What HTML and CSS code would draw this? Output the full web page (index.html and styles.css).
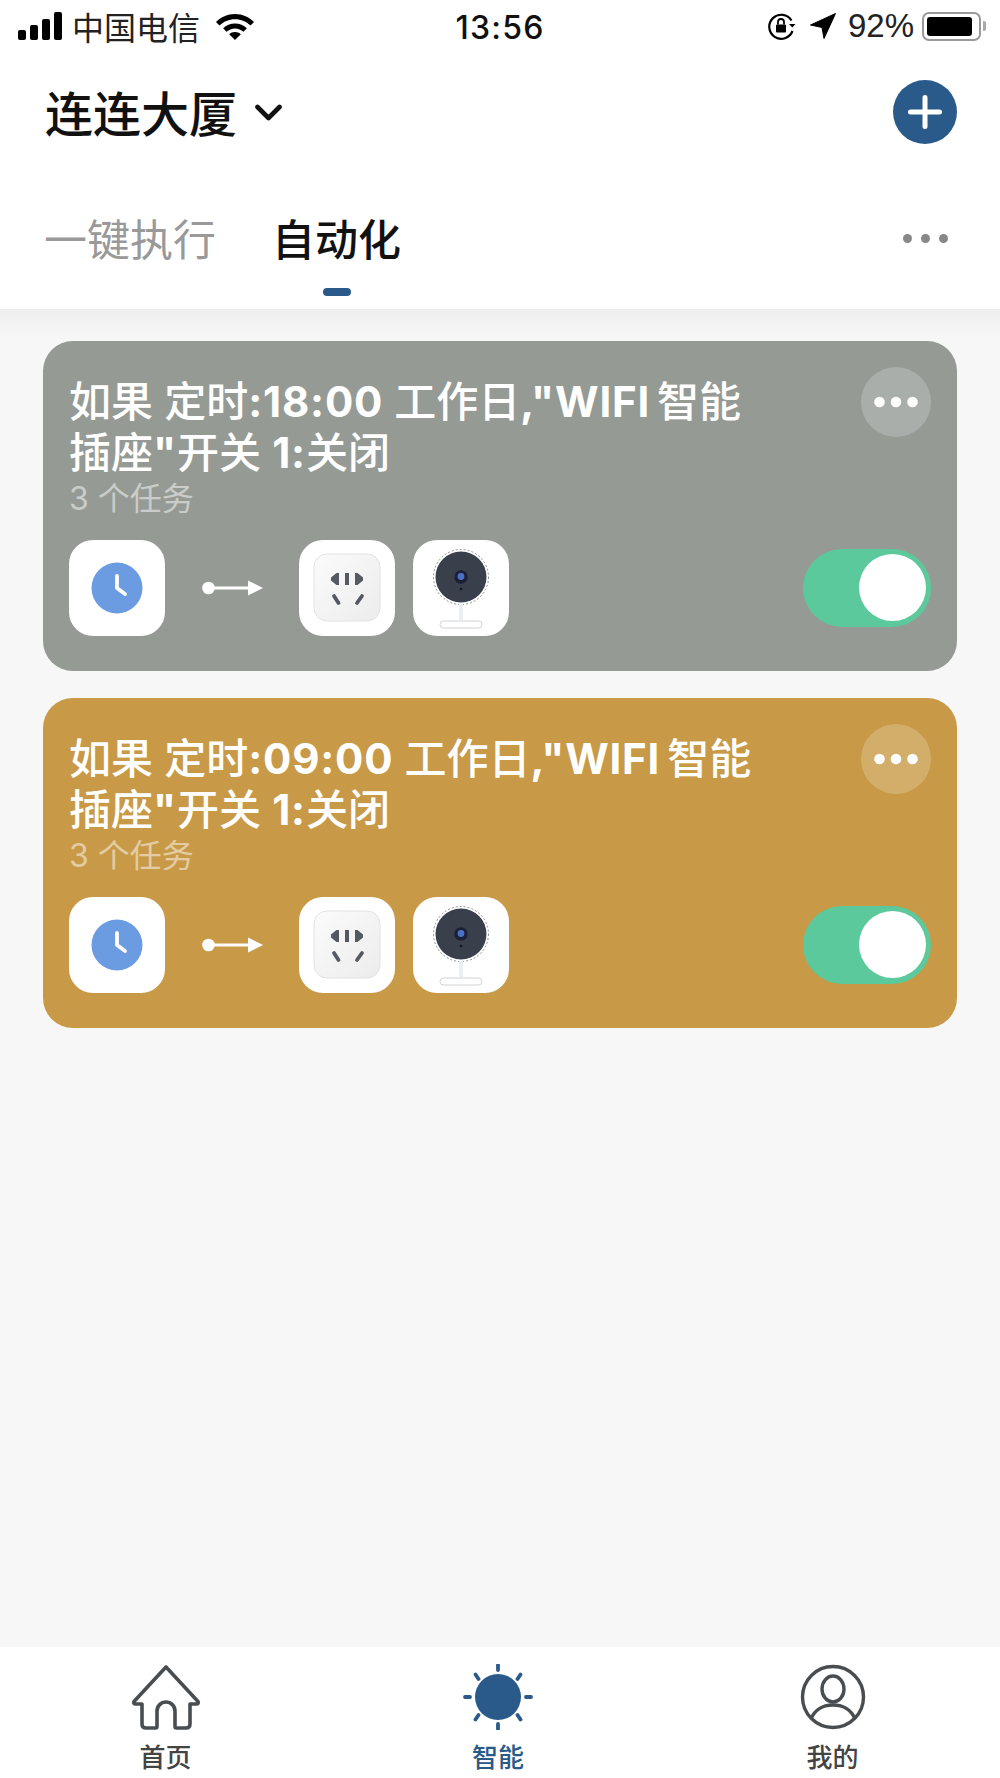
FILE: index.html
```html
<!DOCTYPE html>
<html lang="zh">
<head>
<meta charset="utf-8">
<title>智能</title>
<link rel="stylesheet" href="styles.css">
</head>
<body>

<svg class="defs" width="0" height="0">
<defs>
<linearGradient id="plug-bg" x1="0" y1="0" x2="1" y2="1">
<stop offset="0" stop-color="#fbfbfb"/>
<stop offset="1" stop-color="#ececec"/>
</linearGradient>
<symbol id="clock" viewBox="0 0 96 96">
<circle cx="48" cy="48" r="25.500" fill="#6b9be0"/>
<path d="M48 36v12l8 6" fill="none" stroke="#fff" stroke-width="3.800" stroke-linecap="round" stroke-linejoin="round"/>
</symbol>
<symbol id="arrow" viewBox="0 0 61 20">
<circle cx="6.500" cy="10" r="6.300" fill="#fff"/>
<path d="M6 10h42" stroke="#fff" stroke-width="3"/>
<path d="M46 2.500l15 7.500-15 7.500z" fill="#fff"/>
</symbol>
<symbol id="plug" viewBox="0 0 96 96">
<rect x="15" y="14" width="66" height="67" rx="13" fill="url(#plug-bg)" stroke="#e2e2e2"/>
<path d="M40 33v12h-2.500l-5.500-4.500v-3l5.500-4.500zM56 33v12h2.500l5.500-4.500v-3l-5.500-4.500z" fill="#555a62"/>
<rect x="46" y="33" width="4" height="12" fill="#555a62"/>
<path d="M35 56l4.500 7M63 56l-5 7" stroke="#555a62" stroke-width="3.800" stroke-linecap="round"/>
</symbol>
<symbol id="camera" viewBox="0 0 96 96">
<circle cx="48" cy="37" r="27.500" fill="none" stroke="#888c92" stroke-width="1" stroke-dasharray="2 2"/>
<circle cx="48" cy="37" r="25.500" fill="#3a3f4c"/>
<circle cx="48" cy="37" r="6.700" fill="#1b2036"/>
<circle cx="48" cy="36.500" r="3.400" fill="#4a72c4"/>
<circle cx="48" cy="49" r="1.300" fill="#14161c"/>
<rect x="46" y="64" width="4" height="16" fill="#eceff1"/>
<rect x="27" y="81" width="42" height="7" rx="3.500" fill="#fff" stroke="#d0d2d4"/>
</symbol>
<symbol id="more" viewBox="0 0 70 70">
<circle cx="35" cy="35" r="35" fill="#fff" fill-opacity=".2"/>
<circle cx="18.500" cy="35" r="5.300" fill="#fff"/>
<circle cx="35" cy="35" r="5.300" fill="#fff"/>
<circle cx="51.500" cy="35" r="5.300" fill="#fff"/>
</symbol>
</defs>
</svg>

<!-- status bar -->
<div class="statusbar">
<div class="status-left">
<svg width="44" height="28" viewBox="0 0 44 28"><rect x="0" y="18" width="8" height="10" rx="2"/><rect x="12" y="13" width="8" height="15" rx="2"/><rect x="24" y="7" width="8" height="21" rx="2"/><rect x="36" y="0" width="8" height="28" rx="2"/></svg>
<span class="carrier">中国电信</span>
<svg width="40" height="30" viewBox="0 0 40 30"><path d="M20 3C12.500 3 5.800 6 1 11l3.500 3.500C8.500 10.500 14 8.200 20 8.200s11.500 2.300 15.500 6.300L39 11C34.200 6 27.500 3 20 3z"/><path d="M20 12.500c-4.600 0-8.800 1.800-11.900 4.800l3.500 3.500c2.200-2.100 5.200-3.400 8.400-3.400s6.200 1.300 8.400 3.400l3.500-3.500c-3.100-3-7.300-4.800-11.900-4.800z"/><path d="M20 21c-2.300 0-4.300.9-5.800 2.300L20 29l5.800-5.700C24.300 21.900 22.300 21 20 21z"/></svg>
</div>
<div class="status-time">13:56</div>
<div class="status-right">
<svg width="30" height="28" viewBox="0 0 30 28"><path d="M24.500 8.500A12 12 0 1 0 25.500 19" fill="none" stroke="#000" stroke-width="2.200"/><path d="M22 12h6.500l-3.200 3.500z"/><rect x="9" y="12.500" width="10" height="8" rx="1"/><path d="M11 12.500V10a3 3 0 0 1 6 0v2.500" fill="none" stroke="#000" stroke-width="1.800"/></svg>
<svg class="loc" width="26" height="26" viewBox="0 0 26 26"><path d="M25.500 0.500L0.500 12l11.500 2.500L14 25.500z" stroke="#000" stroke-linejoin="round"/></svg>
<span class="battery-text">92%</span>
<div class="battery"><div class="battery-fill"></div></div>
<div class="battery-cap"></div>
</div>
</div>

<!-- title -->
<div class="topbar">
<div class="home-name">
<span>连连大厦</span>
<svg width="27" height="18" viewBox="0 0 27 18"><path d="M2.500 3l11 11 11-11" fill="none" stroke="#111" stroke-width="4.600" stroke-linecap="round" stroke-linejoin="round"/></svg>
</div>
<div class="add-btn"><svg width="36" height="36" viewBox="0 0 36 36"><path d="M18 3.500v29M3.500 18h29" stroke="#fff" stroke-width="5" stroke-linecap="round"/></svg></div>
</div>

<!-- tabs -->
<div class="tabs">
<div class="tab">一键执行</div>
<div class="tab tab-active">自动化</div>
<div class="tabs-more"><i></i><i></i><i></i></div>
</div>

<div class="content">

<div class="card card-grey">
<div class="card-top">
<div class="card-text">
<div class="card-title">如果 定时<b>:18:00</b> 工作日<b class="wifi">,"WIFI</b>智能插座<b>"</b>开关 <b>1:</b>关闭</div>
<div class="card-sub">3 个任务</div>
</div>
<svg class="card-more" width="70" height="70"><use href="#more"/></svg>
</div>
<div class="card-bottom">
<div class="thumb"><svg width="96" height="96"><use href="#clock"/></svg></div>
<svg class="flow-arrow" width="61" height="20"><use href="#arrow"/></svg>
<div class="thumb"><svg width="96" height="96"><use href="#plug"/></svg></div>
<div class="thumb thumb-last"><svg width="96" height="96"><use href="#camera"/></svg></div>
<div class="toggle"><div class="knob"></div></div>
</div>
</div>

<div class="card card-gold">
<div class="card-top">
<div class="card-text">
<div class="card-title">如果 定时<b>:09:00</b> 工作日<b class="wifi">,"WIFI</b>智能插座<b>"</b>开关 <b>1:</b>关闭</div>
<div class="card-sub">3 个任务</div>
</div>
<svg class="card-more" width="70" height="70"><use href="#more"/></svg>
</div>
<div class="card-bottom">
<div class="thumb"><svg width="96" height="96"><use href="#clock"/></svg></div>
<svg class="flow-arrow" width="61" height="20"><use href="#arrow"/></svg>
<div class="thumb"><svg width="96" height="96"><use href="#plug"/></svg></div>
<div class="thumb thumb-last"><svg width="96" height="96"><use href="#camera"/></svg></div>
<div class="toggle"><div class="knob"></div></div>
</div>
</div>

</div>

<!-- tab bar -->
<div class="tabbar">
<div class="nav-item">
<svg width="70" height="66" viewBox="0 0 70 66"><path d="M35 3L3 37.500c-.8 1.200 0 2.500 1.500 2.500H11v20c0 2.500 1.500 4 4 4h9.500c1 0 1.500-.5 1.500-1.500V47c0-5 4-9 9-9s9 4 9 9v15.500c0 1 .5 1.500 1.500 1.500H55c2.500 0 4-1.500 4-4V40h6.500c1.500 0 2.300-1.300 1.500-2.500z" fill="none" stroke="#4a4d50" stroke-width="3.600" stroke-linejoin="round"/></svg>
<span>首页</span>
</div>
<div class="nav-item nav-active">
<svg width="70" height="66" viewBox="0 0 70 66"><circle cx="35" cy="33" r="23" fill="#2a5a8a"/><path d="M35 1v5M35 60v5M2 33h5M63 33h5M12.500 10.500l3 4.500M57.500 10.500l-3 4.500M12.500 55.500l3-4.500M57.500 55.500l-3-4.500" stroke="#2a5a8a" stroke-width="3.800" stroke-linecap="round"/></svg>
<span>智能</span>
</div>
<div class="nav-item">
<svg width="70" height="66" viewBox="0 0 70 66"><circle cx="35" cy="33" r="30.500" fill="none" stroke="#4a4d50" stroke-width="3.400"/><ellipse cx="35" cy="25" rx="11" ry="13" fill="none" stroke="#4a4d50" stroke-width="3.400"/><path d="M13 55c4-10 13-14 22-14s18 4 22 14" fill="none" stroke="#4a4d50" stroke-width="3.400"/></svg>
<span>我的</span>
</div>
</div>

</body>
</html>
```
FILE: styles.css
```css
* {
box-sizing: border-box;
}
html, body {
margin: 0;
height: 1778px;
}
body {
display: flex;
flex-direction: column;
background-color: #fff;
font-family: "Noto Sans CJK SC", "Liberation Sans", sans-serif;
color: #111;
overflow: hidden;
}
.defs {
position: absolute;
}

/* status bar */
.statusbar {
height: 50px;
padding: 2px 14px 0 18px;
display: flex;
align-items: center;
justify-content: space-between;
flex-shrink: 0;
}
.status-left, .status-right {
display: flex;
align-items: center;
width: 300px;
}
.status-right {
justify-content: flex-end;
}
.carrier {
font-size: 32px;
line-height: 48px;
color: #222;
margin: 0 15px 0 10px;
}
.status-time {
font-family: Inter, "Liberation Sans", sans-serif;
font-size: 32px;
letter-spacing: 1.2px;
font-weight: 500;
color: #111;
margin: 2px 4px 0 0;
}
.status-right svg:first-child {
margin-right: -2px;
}
.loc {
margin: 0 12px 0 15px;
}
.battery-text {
font-family: "Liberation Sans", sans-serif;
font-size: 33px;
color: #222;
margin-right: 8px;
}
.battery {
width: 59px;
height: 29px;
border: 2px solid #999;
border-radius: 7px;
padding: 3px;
}
.battery-fill {
height: 100%;
width: 92%;
background-color: #000;
border-radius: 3px;
}
.battery-cap {
width: 3px;
height: 10px;
margin-left: 2px;
background-color: #aaa;
border-radius: 0 2px 2px 0;
}

/* title */
.topbar {
height: 126px;
padding: 0 43px 0 45px;
display: flex;
align-items: center;
justify-content: space-between;
flex-shrink: 0;
}
.home-name {
display: flex;
align-items: center;
gap: 18px;
font-size: 48px;
font-weight: 500;
}
.home-name span {
padding-bottom: 5px;
}
.add-btn {
width: 64px;
height: 64px;
margin-bottom: 2px;
border-radius: 50%;
background-color: #2a5a8a;
display: flex;
align-items: center;
justify-content: center;
}

/* tabs */
.tabs {
height: 133px;
padding: 0 45px 0 44px;
display: flex;
gap: 56px;
position: relative;
flex-shrink: 0;
}
.tab {
font-size: 43px;
color: #999;
padding-top: 31px;
line-height: 60px;
}
.tab-active {
color: #111;
font-weight: 500;
position: relative;
}
.tab-active::after {
content: "";
position: absolute;
left: 51px;
bottom: 13px;
width: 28px;
height: 8px;
border-radius: 4px;
background-color: #2a5a8a;
}
.tabs-more {
margin-left: auto;
margin-right: 7px;
margin-top: 58px;
display: flex;
gap: 9px;
height: 9px;
}
.tabs-more i {
width: 9px;
height: 9px;
border-radius: 50%;
background-color: #888;
}

/* cards */
.content {
flex: 1;
padding: 32px 43px 0;
background: linear-gradient(#eee, #f7f7f7 30px);
}
.card {
height: 330px;
margin-bottom: 27px;
border-radius: 30px;
padding: 26px 26px 35px 26px;
color: #fff;
display: flex;
flex-direction: column;
justify-content: space-between;
}
.card-grey {
background-color: #959a95;
}
.card-gold {
background-color: #c89a47;
}
.card-top {
display: flex;
justify-content: space-between;
align-items: flex-start;
}
.card-text {
padding-top: 9px;
font-family: Inter, "Noto Sans CJK SC", sans-serif;
}
.card-title {
width: 690px;
font-size: 42px;
line-height: 51px;
font-weight: 500;
}
.card-title b {
font-weight: 700;
letter-spacing: .8px;
}
.card-title .wifi {
margin-right: 7px;
}
.card-sub {
margin-top: 2px;
font-size: 32px;
line-height: 38px;
color: rgba(255, 255, 255, .5);
}
.card-bottom {
display: flex;
align-items: center;
}
.thumb {
width: 96px;
height: 96px;
border-radius: 24px;
background-color: #fff;
overflow: hidden;
}
.thumb svg {
display: block;
}
.flow-arrow {
margin: 0 36px 0 37px;
}
.thumb-last {
margin-left: 18px;
}
.toggle {
margin-left: auto;
width: 128px;
height: 78px;
border-radius: 39px;
background-color: #5bc99b;
padding: 5px 5px 5px 56px;
}
.knob {
width: 67px;
height: 67px;
border-radius: 50%;
background-color: #fff;
}

/* bottom bar */
.tabbar {
height: 131px;
background-color: #fff;
display: grid;
grid-template-columns: 331px 334px 335px;
flex-shrink: 0;
}
.nav-item {
display: flex;
flex-direction: column;
align-items: center;
padding-top: 17px;
font-size: 26px;
line-height: 32px;
font-weight: 500;
color: #444;
}
.nav-item svg {
margin-bottom: 10px;
}
.nav-active {
color: #2a5a8a;
}
```
